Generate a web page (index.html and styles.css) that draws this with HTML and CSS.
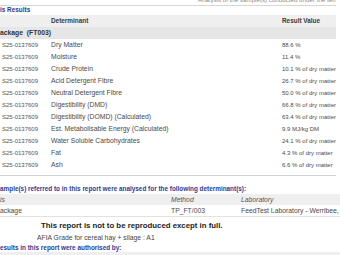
FILE: index.html
```html
<!DOCTYPE html>
<html>
<head>
<meta charset="utf-8">
<link rel="stylesheet" href="styles.css">
</head>
<body>
<div class="page">
  <div class="top-note"><p class="top-note-text">Analysis of the sample(s) conducted under the terms of accreditation</p></div>

  <h2 class="sec-title">is Results</h2>
  <div class="results-block">
    <table class="results">
      <colgroup><col class="c1"><col class="c2"><col class="c3"></colgroup>
      <thead>
        <tr><th></th><th>Determinant</th><th>Result Value</th></tr>
      </thead>
      <tbody>
        <tr class="pkg"><td colspan="3">ackage &nbsp;(FT003)</td></tr>
        <tr><td class="sid">S25-0137609</td><td>Dry Matter</td><td class="val">88.6 %</td></tr>
        <tr><td class="sid">S25-0137609</td><td>Moisture</td><td class="val">11.4 %</td></tr>
        <tr><td class="sid">S25-0137609</td><td>Crude Protein</td><td class="val">10.1 % of dry matter</td></tr>
        <tr><td class="sid">S25-0137609</td><td>Acid Detergent Fibre</td><td class="val">26.7 % of dry matter</td></tr>
        <tr><td class="sid">S25-0137609</td><td>Neutral Detergent Fibre</td><td class="val">50.0 % of dry matter</td></tr>
        <tr><td class="sid">S25-0137609</td><td>Digestibility (DMD)</td><td class="val">66.8 % of dry matter</td></tr>
        <tr><td class="sid">S25-0137609</td><td>Digestibility (DOMD) (Calculated)</td><td class="val">63.4 % of dry matter</td></tr>
        <tr><td class="sid">S25-0137609</td><td>Est. Metabolisable Energy (Calculated)</td><td class="val">9.9 MJ/kg DM</td></tr>
        <tr><td class="sid">S25-0137609</td><td>Water Soluble Carbohydrates</td><td class="val">24.1 % of dry matter</td></tr>
        <tr><td class="sid">S25-0137609</td><td>Fat</td><td class="val">4.3 % of dry matter</td></tr>
        <tr><td class="sid">S25-0137609</td><td>Ash</td><td class="val">6.6 % of dry matter</td></tr>
      </tbody>
    </table>
  </div>

  <h2 class="sec-title sec-gap">ample(s) referred to in this report were analysed for the following determinant(s):</h2>
  <table class="methods">
    <colgroup><col class="m1"><col class="m2"><col class="m3"></colgroup>
    <thead>
      <tr><th>is</th><th>Method</th><th>Laboratory</th></tr>
    </thead>
    <tbody>
      <tr><td>ackage</td><td>TP_FT/003</td><td>FeedTest Laboratory - Werribee, Victoria</td></tr>
    </tbody>
  </table>

  <p class="notice">This report is not to be reproduced except in full.</p>
  <p class="grade">AFIA Grade for cereal hay + silage : A1</p>

  <h2 class="sec-title sec-auth">esults in this report were authorised by:</h2>
  <table class="auth">
    <colgroup><col class="a1"><col class="a2"><col class="a3"></colgroup>
    <thead>
      <tr><th>Signatory</th><th>Name</th><th>Title</th></tr>
    </thead>
  </table>
</div>
</body>
</html>
```

FILE: styles.css
```css
html, body {
  margin: 0;
  padding: 0;
}

body {
  width: 340px;
  height: 255px;
  overflow: hidden;
  background: #ffffff;
  font-family: "Liberation Sans", Arial, sans-serif;
  font-size: 6.8px;
  color: #4a4a4a;
}

.page {
  width: 340px;
}

.top-note {
  height: 5px;
  overflow: hidden;
  border-bottom: 1px solid #d6d6d6;
  margin-right: 4px;
}

.top-note-text {
  margin: -4px 0 0 0;
  padding-left: 198px;
  line-height: 8px;
  font-size: 6.2px;
  white-space: nowrap;
  color: #8a8a8a;
}

.sec-title {
  margin: 0;
  font-size: 6.4px;
  line-height: 8px;
  height: 8px;
  font-weight: bold;
  color: #2d3b8f;
  white-space: nowrap;
  overflow: hidden;
}

.sec-gap {
  margin-top: 9px;
}

.sec-auth {
  margin-top: 1px;
}

.results-block {
  margin-top: 1px;
  margin-right: 4px;
  padding-bottom: 4px;
  border-bottom: 1px solid #d2d2d2;
}

table {
  border-collapse: collapse;
  table-layout: fixed;
}

.results {
  width: 336px;
}

.c1 { width: 48px; }
.c2 { width: 231px; }
.c3 { width: 57px; }

.results th,
.results td {
  height: 12px;
  padding: 0 0 0 3px;
  line-height: 12px;
  text-align: left;
  white-space: nowrap;
  overflow: hidden;
  vertical-align: middle;
}

.results th {
  background: #efefef;
  font-size: 6.4px;
  font-weight: bold;
  color: #3a3a3a;
}

.results .pkg td {
  background: #e6e6e6;
  padding-left: 0;
  font-size: 6.8px;
  font-weight: bold;
  color: #333333;
}

.results td.sid {
  padding-left: 2px;
  font-size: 6px;
  color: #555555;
}

.results td.val {
  font-size: 6px;
}

.methods {
  width: 340px;
  margin-top: 1px;
}

.m1 { width: 168px; }
.m2 { width: 70px; }
.m3 { width: 102px; }

.methods th,
.methods td {
  height: 11px;
  line-height: 11px;
  padding: 0 0 0 3px;
  text-align: left;
  white-space: nowrap;
  overflow: hidden;
}

.methods th:first-child,
.methods td:first-child {
  padding-left: 0;
}

.methods th {
  background: #efefef;
  font-weight: normal;
  font-style: italic;
  color: #555555;
}

.methods td {
  border-bottom: 1px solid #e2e2e2;
}

.notice {
  margin: 4px 0 0 0;
  padding-left: 41px;
  font-size: 7.8px;
  line-height: 10px;
  font-weight: bold;
  color: #222222;
  white-space: nowrap;
}

.grade {
  margin: 2px 0 0 0;
  padding-left: 37px;
  line-height: 10px;
  color: #454545;
  white-space: nowrap;
}

.auth {
  width: 340px;
  margin-top: 0;
}

.a1 { width: 140px; }
.a2 { width: 100px; }
.a3 { width: 100px; }

.auth th {
  height: 12px;
  line-height: 14px;
  padding: 0 0 0 3px;
  background: #efefef;
  font-weight: normal;
  font-style: italic;
  color: #666666;
  text-align: center;
  vertical-align: top;
}
```
